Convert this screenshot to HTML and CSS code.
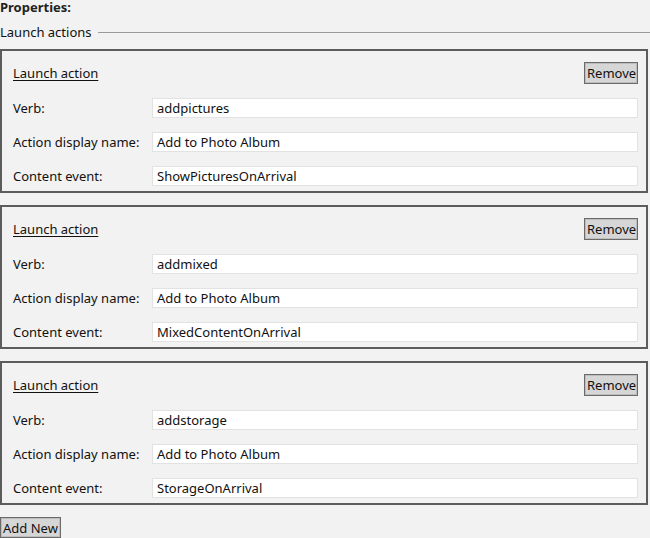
FILE: index.html
```html
<!DOCTYPE html>
<html>
<head>
<meta charset="utf-8">
<link rel="stylesheet" href="styles.css">
</head>
<body>
<div class="page">
  <div class="props-title">Properties:</div>
  <div class="group-legend"><span class="legend-text">Launch actions</span><span class="legend-line"></span></div>

  <div class="panel">
    <div class="panel-head"><span class="panel-title">Launch action</span><button class="btn btn-remove">Remove</button></div>
    <div class="row"><span class="label">Verb:</span><div class="field">addpictures</div></div>
    <div class="row"><span class="label">Action display name:</span><div class="field">Add to Photo Album</div></div>
    <div class="row"><span class="label">Content event:</span><div class="field">ShowPicturesOnArrival</div></div>
  </div>

  <div class="panel">
    <div class="panel-head"><span class="panel-title">Launch action</span><button class="btn btn-remove">Remove</button></div>
    <div class="row"><span class="label">Verb:</span><div class="field">addmixed</div></div>
    <div class="row"><span class="label">Action display name:</span><div class="field">Add to Photo Album</div></div>
    <div class="row"><span class="label">Content event:</span><div class="field">MixedContentOnArrival</div></div>
  </div>

  <div class="panel">
    <div class="panel-head"><span class="panel-title">Launch action</span><button class="btn btn-remove">Remove</button></div>
    <div class="row"><span class="label">Verb:</span><div class="field">addstorage</div></div>
    <div class="row"><span class="label">Action display name:</span><div class="field">Add to Photo Album</div></div>
    <div class="row"><span class="label">Content event:</span><div class="field">StorageOnArrival</div></div>
  </div>

  <button class="btn btn-add">Add New</button>
</div>
</body>
</html>
```

FILE: styles.css
```css
html, body {
  margin: 0;
  padding: 0;
  background: #f2f2f2;
}
body {
  font-family: "Noto Sans", "Open Sans", sans-serif;
  font-size: 13px;
  color: #111;
  width: 650px;
  height: 538px;
  overflow: hidden;
}
.page {
  display: flex;
  flex-direction: column;
  align-items: flex-start;
}
.props-title {
  font-weight: bold;
  line-height: 16px;
  height: 16px;
  margin-top: -1px;
  color: #222;
}
.group-legend {
  display: flex;
  align-items: center;
  width: 650px;
  height: 22px;
  margin-top: 6px;
  margin-bottom: 6px;
}
.legend-text {
  white-space: nowrap;
  margin-right: 6px;
}
.legend-line {
  flex: 1;
  height: 1px;
  background: #9a9a9a;
}
.panel {
  box-sizing: border-box;
  width: 648px;
  border: 2px solid #5c5c5c;
  padding: 11px 8px 5px 11px;
  margin-bottom: 12px;
  display: flex;
  flex-direction: column;
  gap: 14px;
}
.panel-head {
  display: flex;
  justify-content: space-between;
  align-items: center;
  height: 22px;
}
.panel-title {
  text-decoration: underline;
  text-underline-offset: 2px;
}
.btn {
  font-family: inherit;
  font-size: 13px;
  color: #111;
  background: #d6d6d6;
  border: 1px solid #6a6a6a;
  box-shadow: inset 0 0 0 1px #bdbdbd;
  padding: 0 2px;
  margin: 0;
  height: 22px;
  line-height: 18px;
}
.btn-remove {
  width: 54px;
}
.btn-add {
  width: 61px;
  height: 21px;
  padding: 0;
}
.row {
  display: grid;
  grid-template-columns: 139px 1fr;
  align-items: center;
  height: 20px;
}
.label {
  white-space: nowrap;
}
.field {
  box-sizing: border-box;
  height: 20px;
  line-height: 18px;
  background: #fff;
  border: 1px solid #e2e2e2;
  padding: 0 4px;
  color: #111;
}
```
